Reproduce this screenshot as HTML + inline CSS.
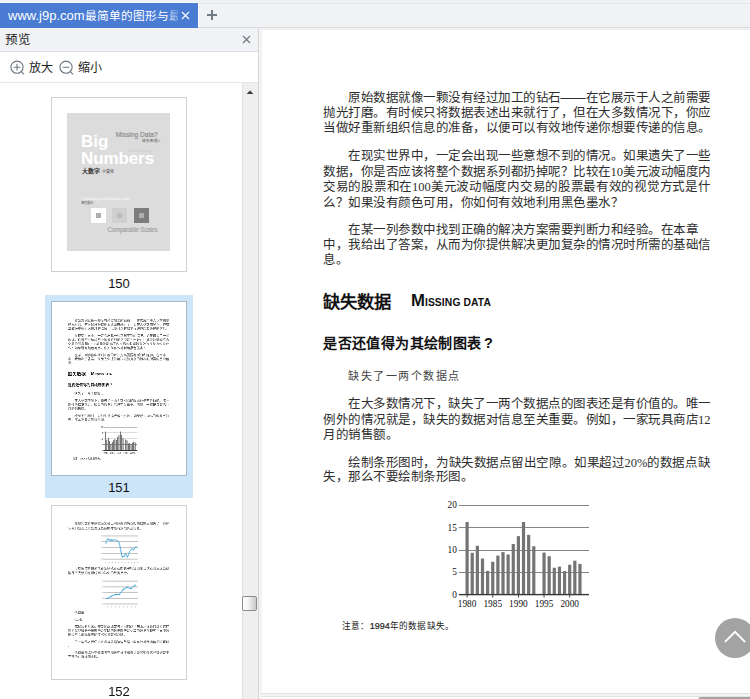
<!DOCTYPE html>
<html lang="zh-CN"><head><meta charset="utf-8"><title>preview</title>
<style>
*{margin:0;padding:0;box-sizing:border-box}
html,body{width:750px;height:699px;overflow:hidden;background:#f1f2f5;font-family:"Liberation Sans",sans-serif;position:relative}
.a{position:absolute}
#tabbar{left:0;top:0;width:750px;height:28px;background:#f1f2f4;border-bottom:1px solid #d9dadd}
#tab{left:0;top:3px;width:198px;height:25px;background:#4a7cd4;color:#fff;font-size:13px;line-height:25px;white-space:nowrap;overflow:hidden}
#tab .tx{position:absolute;left:8px;top:0;width:170px;height:25px;overflow:hidden}
#tab .tx span{font-size:11.7px}
#tab .fade{position:absolute;left:166px;top:0;width:12px;height:25px;background:linear-gradient(90deg,rgba(74,124,212,0),rgba(74,124,212,.7))}
#left{left:0;top:28px;width:258px;height:671px;background:#fff}
#lhead{left:0;top:0;width:258px;height:24px;background:#f0f2f5;border-bottom:1px solid #dcdde0}
#lhead .t{position:absolute;left:5px;top:5.3px;font-size:12.5px;line-height:15px;color:#222}
#ltool{left:0;top:24px;width:258px;height:31px;background:#fff;border-bottom:1px solid #e6e7ea}
.tool{position:absolute;top:9px;font-size:12px;line-height:14px;color:#222}
#sep{left:258px;top:28px;width:1px;height:671px;background:#d5d6d9}
#main{left:259px;top:28px;width:491px;height:671px;background:#f3f3f3}
.pg{position:absolute;width:514px;height:663px;background:#fff;overflow:hidden;transform-origin:0 0}
.ln{position:absolute;display:flex;white-space:nowrap;font-size:12.5px;line-height:15px;height:15px;color:#2e2e2e;font-weight:300}
.ln.j{justify-content:space-between}
.ln i{font-style:normal;display:block;width:12.5px;text-align:center;flex:none}
.ln b.l{font-weight:normal;font-family:"Liberation Serif",serif;flex:none;font-size:12.5px}
.h1{position:absolute;font-size:17.3px;line-height:20px;font-weight:bold;color:#111;white-space:nowrap}
.h1e{position:absolute;font-size:16.7px;line-height:20px;font-weight:bold;color:#111;white-space:nowrap}
.h1e span{font-size:10.3px;letter-spacing:0.12px}
.h2{position:absolute;display:flex;font-size:14px;line-height:17px;font-weight:bold;color:#111;white-space:nowrap}
.h2 i{font-style:normal;display:block;width:14.4px;text-align:center}
.h2 i.q{font-family:"Liberation Sans",sans-serif;font-size:14.5px}
.sm{position:absolute;display:flex;font-size:11px;line-height:14px;color:#444;font-weight:300}
.sm i{font-style:normal;display:block;width:12.5px;text-align:left}
.note{position:absolute;display:flex;font-size:8.6px;line-height:11px;color:#222;white-space:nowrap;font-weight:300}
.note i{font-style:normal;display:block;width:9.4px}
.note i.n{width:9.1px}
.note b{font-weight:normal;font-family:"Liberation Sans",sans-serif;font-size:9px;-webkit-text-stroke:0.2px #222;margin-right:0.4px}
.ch{position:absolute;overflow:visible}
.ch text{font-family:"Liberation Serif",serif;font-size:9.3px;fill:#111}
.cv{white-space:nowrap}
.tp .ln{font-weight:400;color:#4a4a4a}
.plab{width:80px;text-align:center;font-size:13px;line-height:14px;color:#111}
#circ{left:715px;top:618px;width:40px;height:40px;border-radius:50%;background:#a3a3a3}
</style></head><body>
<div id="tabbar" class="a">
 <div class="a" style="left:0;top:0;width:750px;height:2px;background:#eef2f6"></div>
 <div class="a" style="left:0;top:2px;width:199px;height:1px;background:#fff"></div>
 <div class="a" style="left:198px;top:3px;width:552px;height:1px;background:#e4e5e7"></div>
 <div class="a" style="left:198px;top:3px;width:1px;height:24px;background:#fff"></div>
 <div id="tab" class="a"><div class="tx">www.j9p.com<span>最简单的图形与最</span></div><div class="fade"></div>
  <svg class="a" style="left:181px;top:8px" width="9" height="9" viewBox="0 0 9 9"><path d="M1 1L8 8M8 1L1 8" stroke="#fff" stroke-width="1.1"/></svg>
 </div>
 <svg class="a" style="left:206px;top:9px" width="12" height="12" viewBox="0 0 12 12"><path d="M6 1V11M1 6H11" stroke="#717c86" stroke-width="2"/></svg>
</div>
<div id="left" class="a">
 <div id="lhead" class="a"><div class="t">预览</div>
  <svg class="a" style="left:242px;top:7px" width="9" height="9" viewBox="0 0 9 9"><path d="M1 1L8 8M8 1L1 8" stroke="#6b7681" stroke-width="1.1"/></svg>
 </div>
 <div id="ltool" class="a">
  <svg class="a" style="left:9.5px;top:7.5px" width="16" height="16" viewBox="0 0 16 16"><circle cx="7" cy="7.2" r="6.1" fill="none" stroke="#6d7780" stroke-width="1.1"/><path d="M7 3.8V10.6M3.6 7.2H10.4M11.4 11.7L14 14.3" stroke="#6d7780" stroke-width="1.1" fill="none"/></svg><div class="tool" style="left:29px">放大</div>
  <svg class="a" style="left:58.8px;top:7.5px" width="16" height="16" viewBox="0 0 16 16"><circle cx="7" cy="7.2" r="6.1" fill="none" stroke="#6d7780" stroke-width="1.1"/><path d="M3.6 7.2H10.4M11.4 11.7L14 14.3" stroke="#6d7780" stroke-width="1.1" fill="none"/></svg><div class="tool" style="left:78px">缩小</div>
 </div>
 
 <div class="a" style="left:51px;top:69px;width:136px;height:175px;border:1px solid #d0d0d0;background:#fff"></div>
 <div class="a" style="left:67px;top:85px;width:103px;height:138px;background:#dcdcdc;overflow:hidden">
  <div class="a cv" style="left:14px;top:19.8px;font-size:17px;line-height:17px;font-weight:bold;color:#fff">Big</div>
  <div class="a cv" style="left:60.5px;top:35.3px;font-size:4.6px;line-height:5px;color:#cbcbcb;font-family:'Liberation Serif',serif">Small Change</div>
  <div class="a cv" style="left:14px;top:36.5px;font-size:17px;line-height:17px;font-weight:bold;color:#fff;letter-spacing:-0.1px">Numbers</div>
  <div class="a cv" style="left:48.8px;top:18.2px;font-size:6.6px;line-height:7px;color:#8f8f8f;-webkit-text-stroke:0.2px #8f8f8f">Missing Data?</div>
  <div class="a cv" style="left:75px;top:25.6px;font-size:3.7px;line-height:4px;color:#555">缺失数据&gt;</div>
  <div class="a cv" style="left:15px;top:55px;font-size:6px;line-height:7px;color:#333;font-weight:bold">大数字 <span style="font-size:4px;font-weight:normal">小变化</span></div>
  <div class="a cv" style="left:14px;top:83px;font-size:4.8px;line-height:5px;color:#f4f4f4;font-weight:bold;font-family:'Liberation Serif',serif">Coloring with black ink</div>
  <div class="a cv" style="left:14px;top:88px;font-size:3.5px;line-height:4px;color:#666">黑色墨水</div>
  <div class="a" style="left:23.5px;top:95px;width:15px;height:15px;background:#fff"><div class="a" style="left:5px;top:5px;width:5px;height:5px;background:#adadad"></div></div>
  <div class="a" style="left:45px;top:95px;width:15px;height:15px;background:#cfcfcf"><div class="a" style="left:5px;top:5px;width:5px;height:5px;background:#bdbdbd"></div></div>
  <div class="a" style="left:67px;top:95px;width:15px;height:15px;background:#7c7c7c"><div class="a" style="left:5px;top:5px;width:5px;height:5px;background:#aeaeae"></div></div>
  <div class="a cv" style="left:40.5px;top:112.5px;font-size:6.3px;line-height:7px;color:#a3a3a3;letter-spacing:-0.3px;-webkit-text-stroke:0.15px #a3a3a3">Comparable Scales</div>
 </div>
 <div class="a plab" style="left:79px;top:249px">150</div>
 <div class="a" style="left:45px;top:267px;width:148px;height:203px;background:#cde5f9"></div>
 <div class="a" style="left:51px;top:273px;width:136px;height:175px;border:1px solid #a6b9cc;background:#fff;overflow:hidden">
  <div class="pg tp" style="left:0;top:0.5px;transform:scale(0.2612);will-change:transform">
<div class="ln j" style="top:60.80px;left:86.00px;width:362.50px;"><i>原</i><i>始</i><i>数</i><i>据</i><i>就</i><i>像</i><i>一</i><i>颗</i><i>没</i><i>有</i><i>经</i><i>过</i><i>加</i><i>工</i><i>的</i><i>钻</i><i>石</i><i>—</i><i>—</i><i>在</i><i>它</i><i>展</i><i>示</i><i>于</i><i>人</i><i>之</i><i>前</i><i>需</i><i>要</i></div>
<div class="ln j" style="top:76.30px;left:61.00px;width:387.50px;"><i>抛</i><i>光</i><i>打</i><i>磨</i><i>。</i><i>有</i><i>时</i><i>候</i><i>只</i><i>将</i><i>数</i><i>据</i><i>表</i><i>述</i><i>出</i><i>来</i><i>就</i><i>行</i><i>了</i><i>，</i><i>但</i><i>在</i><i>大</i><i>多</i><i>数</i><i>情</i><i>况</i><i>下</i><i>，</i><i>你</i><i>应</i></div>
<div class="ln j" style="top:91.40px;left:61.00px;width:387.50px;"><i>当</i><i>做</i><i>好</i><i>重</i><i>新</i><i>组</i><i>织</i><i>信</i><i>息</i><i>的</i><i>准</i><i>备</i><i>，</i><i>以</i><i>便</i><i>可</i><i>以</i><i>有</i><i>效</i><i>地</i><i>传</i><i>递</i><i>你</i><i>想</i><i>要</i><i>传</i><i>递</i><i>的</i><i>信</i><i>息</i><i>。</i></div>
<div class="ln j" style="top:119.40px;left:86.00px;width:362.50px;"><i>在</i><i>现</i><i>实</i><i>世</i><i>界</i><i>中</i><i>，</i><i>一</i><i>定</i><i>会</i><i>出</i><i>现</i><i>一</i><i>些</i><i>意</i><i>想</i><i>不</i><i>到</i><i>的</i><i>情</i><i>况</i><i>。</i><i>如</i><i>果</i><i>遗</i><i>失</i><i>了</i><i>一</i><i>些</i></div>
<div class="ln j" style="top:134.80px;left:61.00px;width:387.50px;"><i>数</i><i>据</i><i>，</i><i>你</i><i>是</i><i>否</i><i>应</i><i>该</i><i>将</i><i>整</i><i>个</i><i>数</i><i>据</i><i>系</i><i>列</i><i>都</i><i>扔</i><i>掉</i><i>呢</i><i>？</i><i>比</i><i>较</i><i>在</i><b class="l">10</b><i>美</i><i>元</i><i>波</i><i>动</i><i>幅</i><i>度</i><i>内</i></div>
<div class="ln j" style="top:150.10px;left:61.00px;width:387.50px;"><i>交</i><i>易</i><i>的</i><i>股</i><i>票</i><i>和</i><i>在</i><b class="l">100</b><i>美</i><i>元</i><i>波</i><i>动</i><i>幅</i><i>度</i><i>内</i><i>交</i><i>易</i><i>的</i><i>股</i><i>票</i><i>最</i><i>有</i><i>效</i><i>的</i><i>视</i><i>觉</i><i>方</i><i>式</i><i>是</i><i>什</i></div>
<div class="ln" style="top:165.60px;left:61.00px;"><i>么</i><i>？</i><i>如</i><i>果</i><i>没</i><i>有</i><i>颜</i><i>色</i><i>可</i><i>用</i><i>，</i><i>你</i><i>如</i><i>何</i><i>有</i><i>效</i><i>地</i><i>利</i><i>用</i><i>黑</i><i>色</i><i>墨</i><i>水</i><i>？</i></div>
<div class="ln" style="top:193.10px;left:86.00px;"><i>在</i><i>某</i><i>一</i><i>列</i><i>参</i><i>数</i><i>中</i><i>找</i><i>到</i><i>正</i><i>确</i><i>的</i><i>解</i><i>决</i><i>方</i><i>案</i><i>需</i><i>要</i><i>判</i><i>断</i><i>力</i><i>和</i><i>经</i><i>验</i><i>。</i><i>在</i><i>本</i><i>章</i></div>
<div class="ln j" style="top:208.30px;left:61.00px;width:387.50px;"><i>中</i><i>，</i><i>我</i><i>给</i><i>出</i><i>了</i><i>答</i><i>案</i><i>，</i><i>从</i><i>而</i><i>为</i><i>你</i><i>提</i><i>供</i><i>解</i><i>决</i><i>更</i><i>加</i><i>复</i><i>杂</i><i>的</i><i>情</i><i>况</i><i>时</i><i>所</i><i>需</i><i>的</i><i>基</i><i>础</i><i>信</i></div>
<div class="ln" style="top:223.20px;left:61.00px;"><i>息</i><i>。</i></div>
<div class="ln j" style="top:367.10px;left:86.00px;width:362.50px;"><i>在</i><i>大</i><i>多</i><i>数</i><i>情</i><i>况</i><i>下</i><i>，</i><i>缺</i><i>失</i><i>了</i><i>一</i><i>两</i><i>个</i><i>数</i><i>据</i><i>点</i><i>的</i><i>图</i><i>表</i><i>还</i><i>是</i><i>有</i><i>价</i><i>值</i><i>的</i><i>。</i><i>唯</i><i>一</i></div>
<div class="ln j" style="top:382.60px;left:61.00px;width:387.50px;"><i>例</i><i>外</i><i>的</i><i>情</i><i>况</i><i>就</i><i>是</i><i>，</i><i>缺</i><i>失</i><i>的</i><i>数</i><i>据</i><i>对</i><i>信</i><i>息</i><i>至</i><i>关</i><i>重</i><i>要</i><i>。</i><i>例</i><i>如</i><i>，</i><i>一</i><i>家</i><i>玩</i><i>具</i><i>商</i><i>店</i><b class="l">12</b></div>
<div class="ln" style="top:397.80px;left:61.00px;"><i>月</i><i>的</i><i>销</i><i>售</i><i>额</i><i>。</i></div>
<div class="ln j" style="top:425.80px;left:86.00px;width:362.50px;"><i>绘</i><i>制</i><i>条</i><i>形</i><i>图</i><i>时</i><i>，</i><i>为</i><i>缺</i><i>失</i><i>数</i><i>据</i><i>点</i><i>留</i><i>出</i><i>空</i><i>隙</i><i>。</i><i>如</i><i>果</i><i>超</i><i>过</i><b class="l">20%</b><i>的</i><i>数</i><i>据</i><i>点</i><i>缺</i></div>
<div class="ln" style="top:440.40px;left:61.00px;"><i>失</i><i>，</i><i>那</i><i>么</i><i>不</i><i>要</i><i>绘</i><i>制</i><i>条</i><i>形</i><i>图</i><i>。</i></div>
<div class="h1" style="top:261.8px;left:61px">缺失数据</div>
<div class="h1e" style="top:261.2px;left:149px">M<span>ISSING DATA</span></div>
<div class="h2" style="top:305.3px;left:61px"><i>是</i><i>否</i><i>还</i><i>值</i><i>得</i><i>为</i><i>其</i><i>绘</i><i>制</i><i>图</i><i>表</i><i class="q">?</i></div>
<div class="sm" style="top:338.7px;left:86px"><i>缺</i><i>失</i><i>了</i><i>一</i><i>两</i><i>个</i><i>数</i><i>据</i><i>点</i></div>
<div class="note" style="top:591.0px;left:79.6px"><i>注</i><i>意</i><i>：</i><b>1994</b><i class="n">年</i><i class="n">的</i><i class="n">数</i><i class="n">据</i><i class="n">缺</i><i class="n">失</i><i class="n">。</i></div>
<svg class="ch" style="left:178px;top:465px" width="160" height="120" viewBox="0 0 160 120"><rect x="18.8" y="76.00" width="130.2" height="2.6" fill="#858585"/><rect x="18.8" y="54.00" width="130.2" height="2.6" fill="#858585"/><rect x="18.8" y="31.00" width="130.2" height="2.6" fill="#858585"/><rect x="18.8" y="9.00" width="130.2" height="2.6" fill="#858585"/><rect x="25.10" y="27.02" width="4" height="72.58" fill="#747474"/><rect x="30.23" y="57.80" width="4" height="41.80" fill="#747474"/><rect x="35.36" y="50.77" width="4" height="48.83" fill="#747474"/><rect x="40.49" y="63.54" width="4" height="36.06" fill="#747474"/><rect x="45.62" y="75.90" width="4" height="23.70" fill="#747474"/><rect x="50.75" y="66.76" width="4" height="32.84" fill="#747474"/><rect x="55.88" y="60.58" width="4" height="39.02" fill="#747474"/><rect x="61.01" y="57.13" width="4" height="42.47" fill="#747474"/><rect x="66.14" y="59.50" width="4" height="40.10" fill="#747474"/><rect x="71.27" y="49.02" width="4" height="50.58" fill="#747474"/><rect x="76.40" y="41.14" width="4" height="58.46" fill="#747474"/><rect x="81.53" y="27.02" width="4" height="72.58" fill="#747474"/><rect x="86.66" y="39.88" width="4" height="59.72" fill="#747474"/><rect x="91.79" y="51.22" width="4" height="48.38" fill="#747474"/><rect x="102.05" y="57.58" width="4" height="42.02" fill="#747474"/><rect x="107.18" y="61.21" width="4" height="38.39" fill="#747474"/><rect x="112.31" y="72.72" width="4" height="26.88" fill="#747474"/><rect x="117.44" y="71.64" width="4" height="27.96" fill="#747474"/><rect x="122.57" y="76.12" width="4" height="23.48" fill="#747474"/><rect x="127.70" y="69.72" width="4" height="29.88" fill="#747474"/><rect x="132.83" y="65.69" width="4" height="33.91" fill="#747474"/><rect x="137.96" y="68.87" width="4" height="30.73" fill="#747474"/><rect x="18.8" y="98.90" width="130.2" height="3" fill="#3a3a3a"/><rect x="26.65" y="99.60" width="0.9" height="3" fill="#3a3a3a"/><rect x="52.30" y="99.60" width="0.9" height="3" fill="#3a3a3a"/><rect x="77.95" y="99.60" width="0.9" height="3" fill="#3a3a3a"/><rect x="103.60" y="99.60" width="0.9" height="3" fill="#3a3a3a"/><rect x="129.25" y="99.60" width="0.9" height="3" fill="#3a3a3a"/><text x="16.9" y="102.80" text-anchor="end">0</text><text x="16.9" y="80.40" text-anchor="end">5</text><text x="16.9" y="58.00" text-anchor="end">10</text><text x="16.9" y="35.60" text-anchor="end">15</text><text x="16.9" y="13.20" text-anchor="end">20</text><text x="27.10" y="111.6" text-anchor="middle">1980</text><text x="52.75" y="111.6" text-anchor="middle">1985</text><text x="78.40" y="111.6" text-anchor="middle">1990</text><text x="104.05" y="111.6" text-anchor="middle">1995</text><text x="129.70" y="111.6" text-anchor="middle">2000</text></svg>
  </div>
 </div>
 <div class="a plab" style="left:79px;top:453px">151</div>
 <div class="a" style="left:51px;top:477px;width:136px;height:175px;border:1px solid #d0d0d0;background:#fff;overflow:hidden">
  <div class="pg tp" style="left:0;top:0;transform:scale(0.2612);will-change:transform">
<div class="ln j" style="top:59.50px;left:86.00px;width:362.50px;"><i>在</i><i>现</i><i>实</i><i>世</i><i>界</i><i>中</i><i>数</i><i>据</i><i>经</i><i>常</i><i>会</i><i>出</i><i>现</i><i>缺</i><i>失</i><i>的</i><i>情</i><i>况</i><i>如</i><i>果</i><i>数</i><i>据</i><i>点</i><i>缺</i><i>失</i><i>了</i><i>一</i><i>些</i><i>那</i></div>
<div class="ln" style="top:78.64px;left:61.00px;"><i>么</i><i>我</i><i>们</i><i>应</i><i>该</i><i>怎</i><i>样</i><i>处</i><i>理</i><i>这</i><i>些</i><i>数</i><i>据</i><i>才</i><i>能</i><i>有</i><i>效</i><i>地</i><i>传</i><i>递</i><i>信</i><i>息</i><i>。</i></div>
<div class="ln j" style="top:231.78px;left:86.00px;width:362.50px;"><i>可</i><i>以</i><i>用</i><i>估</i><i>算</i><i>值</i><i>来</i><i>填</i><i>补</i><i>空</i><i>缺</i><i>或</i><i>者</i><i>在</i><i>图</i><i>表</i><i>中</i><i>标</i><i>注</i><i>出</i><i>来</i><i>让</i><i>读</i><i>者</i><i>知</i><i>道</i><i>这</i><i>些</i><i>数</i></div>
<div class="ln" style="top:249.77px;left:61.00px;"><i>据</i><i>是</i><i>不</i><i>完</i><i>整</i><i>的</i><i>在</i><i>折</i><i>线</i><i>图</i><i>中</i><i>缺</i><i>失</i><i>的</i><i>数</i><i>据</i><i>点</i><i>会</i><i>。</i></div>
<div class="ln j" style="top:454.98px;left:86.00px;width:362.50px;"><i>成</i><i>线</i><i>条</i><i>断</i><i>开</i><i>因</i><i>此</i><i>需</i><i>要</i><i>用</i><i>虚</i><i>线</i><i>或</i><i>者</i><i>不</i><i>同</i><i>的</i><i>颜</i><i>色</i><i>来</i><i>表</i><i>示</i><i>估</i><i>算</i><i>的</i><i>部</i><i>分</i><i>这</i><i>样</i></div>
<div class="ln j" style="top:471.06px;left:61.00px;width:387.50px;"><i>读</i><i>者</i><i>就</i><i>能</i><i>够</i><i>分</i><i>辨</i><i>出</i><i>哪</i><i>些</i><i>是</i><i>实</i><i>际</i><i>的</i><i>数</i><i>据</i><i>哪</i><i>些</i><i>是</i><i>估</i><i>算</i><i>的</i><i>数</i><i>据</i><i>在</i><i>现</i><i>实</i><i>世</i><i>界</i><i>中</i><i>数</i></div>
<div class="ln" style="top:486.37px;left:61.00px;"><i>据</i><i>经</i><i>常</i><i>会</i><i>出</i><i>现</i><i>缺</i><i>失</i><i>的</i><i>情</i><i>况</i><i>如</i><i>果</i><i>数</i><i>据</i><i>点</i><i>缺</i><i>。</i></div>
<div class="ln j" style="top:513.56px;left:86.00px;width:362.50px;"><i>了</i><i>一</i><i>些</i><i>那</i><i>么</i><i>我</i><i>们</i><i>应</i><i>该</i><i>怎</i><i>样</i><i>处</i><i>理</i><i>这</i><i>些</i><i>数</i><i>据</i><i>才</i><i>能</i><i>有</i><i>效</i><i>地</i><i>传</i><i>递</i><i>信</i><i>息</i><i>呢</i><i>可</i><i>以</i></div>
<div class="ln" style="top:528.87px;left:61.00px;"><i>。</i></div>
<div class="ln j" style="top:554.52px;left:86.00px;width:362.50px;"><i>估</i><i>算</i><i>值</i><i>来</i><i>填</i><i>补</i><i>空</i><i>缺</i><i>或</i><i>者</i><i>在</i><i>图</i><i>表</i><i>中</i><i>标</i><i>注</i><i>出</i><i>来</i><i>让</i><i>读</i><i>者</i><i>知</i><i>道</i><i>这</i><i>些</i><i>数</i><i>据</i><i>是</i><i>不</i></div>
<div class="ln" style="top:570.60px;left:61.00px;"><i>完</i><i>整</i><i>的</i><i>在</i><i>折</i><i>线</i><i>图</i><i>中</i><i>缺</i><i>。</i></div>
<div class="ln" style="top:401.76px;left:86.00px;"><i>估</i><i>算</i><i>值</i></div>
<div class="ln" style="top:428.2px;left:86px;font-family:'Liberation Serif',serif">Guide</div>
  </div>
<svg class="a" style="left:0;top:0" width="136" height="175"><rect x="51.0" y="29.6" width="35" height="0.7" fill="#a8a8a8"/><rect x="51.0" y="35.2" width="35" height="0.7" fill="#a8a8a8"/><rect x="51.0" y="41.3" width="35" height="0.7" fill="#a8a8a8"/><rect x="51.0" y="47.2" width="35" height="0.7" fill="#a8a8a8"/><rect x="51.0" y="52.8" width="35" height="0.7" fill="#a8a8a8"/><rect x="52.2" y="74.8" width="33.6" height="0.7" fill="#a8a8a8"/><rect x="52.2" y="80.5" width="33.6" height="0.7" fill="#a8a8a8"/><rect x="52.2" y="86.1" width="33.6" height="0.7" fill="#a8a8a8"/><rect x="52.2" y="92.0" width="33.6" height="0.7" fill="#a8a8a8"/><rect x="52.2" y="97.6" width="33.6" height="0.7" fill="#a8a8a8"/><rect x="49.2" y="29.4" width="1.2" height="0.9" fill="#aaa"/><rect x="49.2" y="35.0" width="1.2" height="0.9" fill="#aaa"/><rect x="49.2" y="41.1" width="1.2" height="0.9" fill="#aaa"/><rect x="49.2" y="47.0" width="1.2" height="0.9" fill="#aaa"/><rect x="49.2" y="52.6" width="1.2" height="0.9" fill="#aaa"/><rect x="50.4" y="74.6" width="1.2" height="0.9" fill="#aaa"/><rect x="50.4" y="80.3" width="1.2" height="0.9" fill="#aaa"/><rect x="50.4" y="85.9" width="1.2" height="0.9" fill="#aaa"/><rect x="50.4" y="91.8" width="1.2" height="0.9" fill="#aaa"/><rect x="50.4" y="97.4" width="1.2" height="0.9" fill="#aaa"/><rect x="53.5" y="56.0" width="0.6" height="1" fill="#999"/><rect x="56.7" y="56.0" width="0.6" height="1" fill="#999"/><rect x="59.9" y="56.0" width="0.6" height="1" fill="#999"/><rect x="63.1" y="56.0" width="0.6" height="1" fill="#999"/><rect x="66.3" y="56.0" width="0.6" height="1" fill="#999"/><rect x="69.5" y="56.0" width="0.6" height="1" fill="#999"/><rect x="72.7" y="56.0" width="0.6" height="1" fill="#999"/><rect x="75.9" y="56.0" width="0.6" height="1" fill="#999"/><rect x="79.1" y="56.0" width="0.6" height="1" fill="#999"/><rect x="82.3" y="56.0" width="0.6" height="1" fill="#999"/><rect x="85.5" y="56.0" width="0.6" height="1" fill="#999"/><rect x="55.0" y="100.3" width="0.6" height="1" fill="#999"/><rect x="59.0" y="100.3" width="0.6" height="1" fill="#999"/><rect x="63.0" y="100.3" width="0.6" height="1" fill="#999"/><rect x="67.0" y="100.3" width="0.6" height="1" fill="#999"/><rect x="71.0" y="100.3" width="0.6" height="1" fill="#999"/><rect x="75.0" y="100.3" width="0.6" height="1" fill="#999"/><rect x="79.0" y="100.3" width="0.6" height="1" fill="#999"/><rect x="83.0" y="100.3" width="0.6" height="1" fill="#999"/><polyline points="53.8,37.8 54.6,34.5 55.5,32.8 56.3,32.6 57.2,34.6 58.0,33.4 59.0,35.0 59.8,33.3 60.7,34.8 61.5,33.6 62.4,34.2 63.2,33.5 64.2,35.2 65.2,34.4 66.6,35.5 67.6,38.5 68.6,43.5 69.4,48.0 70.4,51.4 71.4,50.0 72.2,51.0 73.6,47.2 74.6,49.4 75.4,51.4 76.6,48.5 77.6,45.5 78.6,44.5 80.2,42.5 81.4,44.2 82.6,42.0 84.2,40.5 85.5,42.0" fill="none" stroke="#3aa6dc" stroke-width="0.9" stroke-linejoin="round"/><polyline points="55.0,92.5 59.0,90.5 63.4,88.5 67.4,88.5 71.4,83.4 74.6,81.5 79.0,82.5 83.0,79.2" fill="none" stroke="#3aa6dc" stroke-width="0.9"/><circle cx="55.0" cy="92.5" r="0.8" fill="#3aa6dc"/><circle cx="59.0" cy="90.5" r="0.8" fill="#3aa6dc"/><circle cx="63.4" cy="88.5" r="0.8" fill="#3aa6dc"/><circle cx="67.4" cy="88.5" r="0.8" fill="#3aa6dc"/><circle cx="71.4" cy="83.4" r="0.8" fill="#3aa6dc"/><circle cx="74.6" cy="81.5" r="0.8" fill="#3aa6dc"/><circle cx="79.0" cy="82.5" r="0.8" fill="#3aa6dc"/><circle cx="83.0" cy="79.2" r="0.8" fill="#3aa6dc"/></svg>
 </div>
 <div class="a plab" style="left:79px;top:657px">152</div>
 <div class="a" style="left:242px;top:55px;width:16px;height:616px;background:#efefef;border-left:1px solid #e2e2e2"></div>
 <svg class="a" style="left:245px;top:60px" width="10" height="8" viewBox="0 0 10 8"><path d="M1.6 6L5 2.4L8.4 6Z" fill="#3a3a3a"/></svg>
 <div class="a" style="left:242px;top:568px;width:15px;height:15px;border:1px solid #8e8e8e;border-radius:2px;background:linear-gradient(90deg,#fff,#f4f4f4 40%,#c9c9c9)"></div>

</div>
<div id="sep" class="a"></div>
<div id="main" class="a">
 <div class="pg" style="left:3px;top:2px">
<div class="ln j" style="top:60.80px;left:86.00px;width:362.50px;"><i>原</i><i>始</i><i>数</i><i>据</i><i>就</i><i>像</i><i>一</i><i>颗</i><i>没</i><i>有</i><i>经</i><i>过</i><i>加</i><i>工</i><i>的</i><i>钻</i><i>石</i><i>—</i><i>—</i><i>在</i><i>它</i><i>展</i><i>示</i><i>于</i><i>人</i><i>之</i><i>前</i><i>需</i><i>要</i></div>
<div class="ln j" style="top:76.30px;left:61.00px;width:387.50px;"><i>抛</i><i>光</i><i>打</i><i>磨</i><i>。</i><i>有</i><i>时</i><i>候</i><i>只</i><i>将</i><i>数</i><i>据</i><i>表</i><i>述</i><i>出</i><i>来</i><i>就</i><i>行</i><i>了</i><i>，</i><i>但</i><i>在</i><i>大</i><i>多</i><i>数</i><i>情</i><i>况</i><i>下</i><i>，</i><i>你</i><i>应</i></div>
<div class="ln j" style="top:91.40px;left:61.00px;width:387.50px;"><i>当</i><i>做</i><i>好</i><i>重</i><i>新</i><i>组</i><i>织</i><i>信</i><i>息</i><i>的</i><i>准</i><i>备</i><i>，</i><i>以</i><i>便</i><i>可</i><i>以</i><i>有</i><i>效</i><i>地</i><i>传</i><i>递</i><i>你</i><i>想</i><i>要</i><i>传</i><i>递</i><i>的</i><i>信</i><i>息</i><i>。</i></div>
<div class="ln j" style="top:119.40px;left:86.00px;width:362.50px;"><i>在</i><i>现</i><i>实</i><i>世</i><i>界</i><i>中</i><i>，</i><i>一</i><i>定</i><i>会</i><i>出</i><i>现</i><i>一</i><i>些</i><i>意</i><i>想</i><i>不</i><i>到</i><i>的</i><i>情</i><i>况</i><i>。</i><i>如</i><i>果</i><i>遗</i><i>失</i><i>了</i><i>一</i><i>些</i></div>
<div class="ln j" style="top:134.80px;left:61.00px;width:387.50px;"><i>数</i><i>据</i><i>，</i><i>你</i><i>是</i><i>否</i><i>应</i><i>该</i><i>将</i><i>整</i><i>个</i><i>数</i><i>据</i><i>系</i><i>列</i><i>都</i><i>扔</i><i>掉</i><i>呢</i><i>？</i><i>比</i><i>较</i><i>在</i><b class="l">10</b><i>美</i><i>元</i><i>波</i><i>动</i><i>幅</i><i>度</i><i>内</i></div>
<div class="ln j" style="top:150.10px;left:61.00px;width:387.50px;"><i>交</i><i>易</i><i>的</i><i>股</i><i>票</i><i>和</i><i>在</i><b class="l">100</b><i>美</i><i>元</i><i>波</i><i>动</i><i>幅</i><i>度</i><i>内</i><i>交</i><i>易</i><i>的</i><i>股</i><i>票</i><i>最</i><i>有</i><i>效</i><i>的</i><i>视</i><i>觉</i><i>方</i><i>式</i><i>是</i><i>什</i></div>
<div class="ln" style="top:165.60px;left:61.00px;"><i>么</i><i>？</i><i>如</i><i>果</i><i>没</i><i>有</i><i>颜</i><i>色</i><i>可</i><i>用</i><i>，</i><i>你</i><i>如</i><i>何</i><i>有</i><i>效</i><i>地</i><i>利</i><i>用</i><i>黑</i><i>色</i><i>墨</i><i>水</i><i>？</i></div>
<div class="ln" style="top:193.10px;left:86.00px;"><i>在</i><i>某</i><i>一</i><i>列</i><i>参</i><i>数</i><i>中</i><i>找</i><i>到</i><i>正</i><i>确</i><i>的</i><i>解</i><i>决</i><i>方</i><i>案</i><i>需</i><i>要</i><i>判</i><i>断</i><i>力</i><i>和</i><i>经</i><i>验</i><i>。</i><i>在</i><i>本</i><i>章</i></div>
<div class="ln j" style="top:208.30px;left:61.00px;width:387.50px;"><i>中</i><i>，</i><i>我</i><i>给</i><i>出</i><i>了</i><i>答</i><i>案</i><i>，</i><i>从</i><i>而</i><i>为</i><i>你</i><i>提</i><i>供</i><i>解</i><i>决</i><i>更</i><i>加</i><i>复</i><i>杂</i><i>的</i><i>情</i><i>况</i><i>时</i><i>所</i><i>需</i><i>的</i><i>基</i><i>础</i><i>信</i></div>
<div class="ln" style="top:223.20px;left:61.00px;"><i>息</i><i>。</i></div>
<div class="ln j" style="top:367.10px;left:86.00px;width:362.50px;"><i>在</i><i>大</i><i>多</i><i>数</i><i>情</i><i>况</i><i>下</i><i>，</i><i>缺</i><i>失</i><i>了</i><i>一</i><i>两</i><i>个</i><i>数</i><i>据</i><i>点</i><i>的</i><i>图</i><i>表</i><i>还</i><i>是</i><i>有</i><i>价</i><i>值</i><i>的</i><i>。</i><i>唯</i><i>一</i></div>
<div class="ln j" style="top:382.60px;left:61.00px;width:387.50px;"><i>例</i><i>外</i><i>的</i><i>情</i><i>况</i><i>就</i><i>是</i><i>，</i><i>缺</i><i>失</i><i>的</i><i>数</i><i>据</i><i>对</i><i>信</i><i>息</i><i>至</i><i>关</i><i>重</i><i>要</i><i>。</i><i>例</i><i>如</i><i>，</i><i>一</i><i>家</i><i>玩</i><i>具</i><i>商</i><i>店</i><b class="l">12</b></div>
<div class="ln" style="top:397.80px;left:61.00px;"><i>月</i><i>的</i><i>销</i><i>售</i><i>额</i><i>。</i></div>
<div class="ln j" style="top:425.80px;left:86.00px;width:362.50px;"><i>绘</i><i>制</i><i>条</i><i>形</i><i>图</i><i>时</i><i>，</i><i>为</i><i>缺</i><i>失</i><i>数</i><i>据</i><i>点</i><i>留</i><i>出</i><i>空</i><i>隙</i><i>。</i><i>如</i><i>果</i><i>超</i><i>过</i><b class="l">20%</b><i>的</i><i>数</i><i>据</i><i>点</i><i>缺</i></div>
<div class="ln" style="top:440.40px;left:61.00px;"><i>失</i><i>，</i><i>那</i><i>么</i><i>不</i><i>要</i><i>绘</i><i>制</i><i>条</i><i>形</i><i>图</i><i>。</i></div>
<div class="h1" style="top:261.8px;left:61px">缺失数据</div>
<div class="h1e" style="top:261.2px;left:149px">M<span>ISSING DATA</span></div>
<div class="h2" style="top:305.3px;left:61px"><i>是</i><i>否</i><i>还</i><i>值</i><i>得</i><i>为</i><i>其</i><i>绘</i><i>制</i><i>图</i><i>表</i><i class="q">?</i></div>
<div class="sm" style="top:338.7px;left:86px"><i>缺</i><i>失</i><i>了</i><i>一</i><i>两</i><i>个</i><i>数</i><i>据</i><i>点</i></div>
<div class="note" style="top:591.0px;left:79.6px"><i>注</i><i>意</i><i>：</i><b>1994</b><i class="n">年</i><i class="n">的</i><i class="n">数</i><i class="n">据</i><i class="n">缺</i><i class="n">失</i><i class="n">。</i></div>
<svg class="ch" style="left:178px;top:465px" width="160" height="120" viewBox="0 0 160 120"><rect x="18.8" y="77.00" width="130.2" height="1" fill="#858585"/><rect x="18.8" y="55.00" width="130.2" height="1" fill="#858585"/><rect x="18.8" y="32.00" width="130.2" height="1" fill="#858585"/><rect x="18.8" y="10.00" width="130.2" height="1" fill="#858585"/><rect x="25.50" y="27.02" width="3.2" height="72.58" fill="#747474"/><rect x="30.63" y="57.80" width="3.2" height="41.80" fill="#747474"/><rect x="35.76" y="50.77" width="3.2" height="48.83" fill="#747474"/><rect x="40.89" y="63.54" width="3.2" height="36.06" fill="#747474"/><rect x="46.02" y="75.90" width="3.2" height="23.70" fill="#747474"/><rect x="51.15" y="66.76" width="3.2" height="32.84" fill="#747474"/><rect x="56.28" y="60.58" width="3.2" height="39.02" fill="#747474"/><rect x="61.41" y="57.13" width="3.2" height="42.47" fill="#747474"/><rect x="66.54" y="59.50" width="3.2" height="40.10" fill="#747474"/><rect x="71.67" y="49.02" width="3.2" height="50.58" fill="#747474"/><rect x="76.80" y="41.14" width="3.2" height="58.46" fill="#747474"/><rect x="81.93" y="27.02" width="3.2" height="72.58" fill="#747474"/><rect x="87.06" y="39.88" width="3.2" height="59.72" fill="#747474"/><rect x="92.19" y="51.22" width="3.2" height="48.38" fill="#747474"/><rect x="102.45" y="57.58" width="3.2" height="42.02" fill="#747474"/><rect x="107.58" y="61.21" width="3.2" height="38.39" fill="#747474"/><rect x="112.71" y="72.72" width="3.2" height="26.88" fill="#747474"/><rect x="117.84" y="71.64" width="3.2" height="27.96" fill="#747474"/><rect x="122.97" y="76.12" width="3.2" height="23.48" fill="#747474"/><rect x="128.10" y="69.72" width="3.2" height="29.88" fill="#747474"/><rect x="133.23" y="65.69" width="3.2" height="33.91" fill="#747474"/><rect x="138.36" y="68.87" width="3.2" height="30.73" fill="#747474"/><rect x="18.8" y="98.90" width="130.2" height="1.4" fill="#3a3a3a"/><rect x="26.65" y="99.60" width="0.9" height="3" fill="#3a3a3a"/><rect x="52.30" y="99.60" width="0.9" height="3" fill="#3a3a3a"/><rect x="77.95" y="99.60" width="0.9" height="3" fill="#3a3a3a"/><rect x="103.60" y="99.60" width="0.9" height="3" fill="#3a3a3a"/><rect x="129.25" y="99.60" width="0.9" height="3" fill="#3a3a3a"/><text x="16.9" y="102.80" text-anchor="end">0</text><text x="16.9" y="80.40" text-anchor="end">5</text><text x="16.9" y="58.00" text-anchor="end">10</text><text x="16.9" y="35.60" text-anchor="end">15</text><text x="16.9" y="13.20" text-anchor="end">20</text><text x="27.10" y="111.6" text-anchor="middle">1980</text><text x="52.75" y="111.6" text-anchor="middle">1985</text><text x="78.40" y="111.6" text-anchor="middle">1990</text><text x="104.05" y="111.6" text-anchor="middle">1995</text><text x="129.70" y="111.6" text-anchor="middle">2000</text></svg>
 </div>
 <div class="a" style="left:3px;top:1px;width:491px;height:1px;background:#ececec"></div>
 <div class="a" style="left:3px;top:665px;width:491px;height:1px;background:#e3e3e3"></div>
 <div class="a" style="left:3px;top:668px;width:491px;height:1px;background:#e3e3e3"></div>
 <div class="a" style="left:3px;top:669px;width:491px;height:2px;background:#fff"></div>
 <div class="a" style="left:439px;top:669px;width:60px;height:4px;background:#a3a3a3;border-radius:3px 0 0 0"></div>
</div>
<div id="circ" class="a"><svg class="a" style="left:0;top:0" width="40" height="40" viewBox="0 0 40 40"><path d="M10.5 23.4L20 13.9L29.5 23.4" fill="none" stroke="#fff" stroke-width="2" stroke-linecap="round"/></svg></div>
</body></html>
